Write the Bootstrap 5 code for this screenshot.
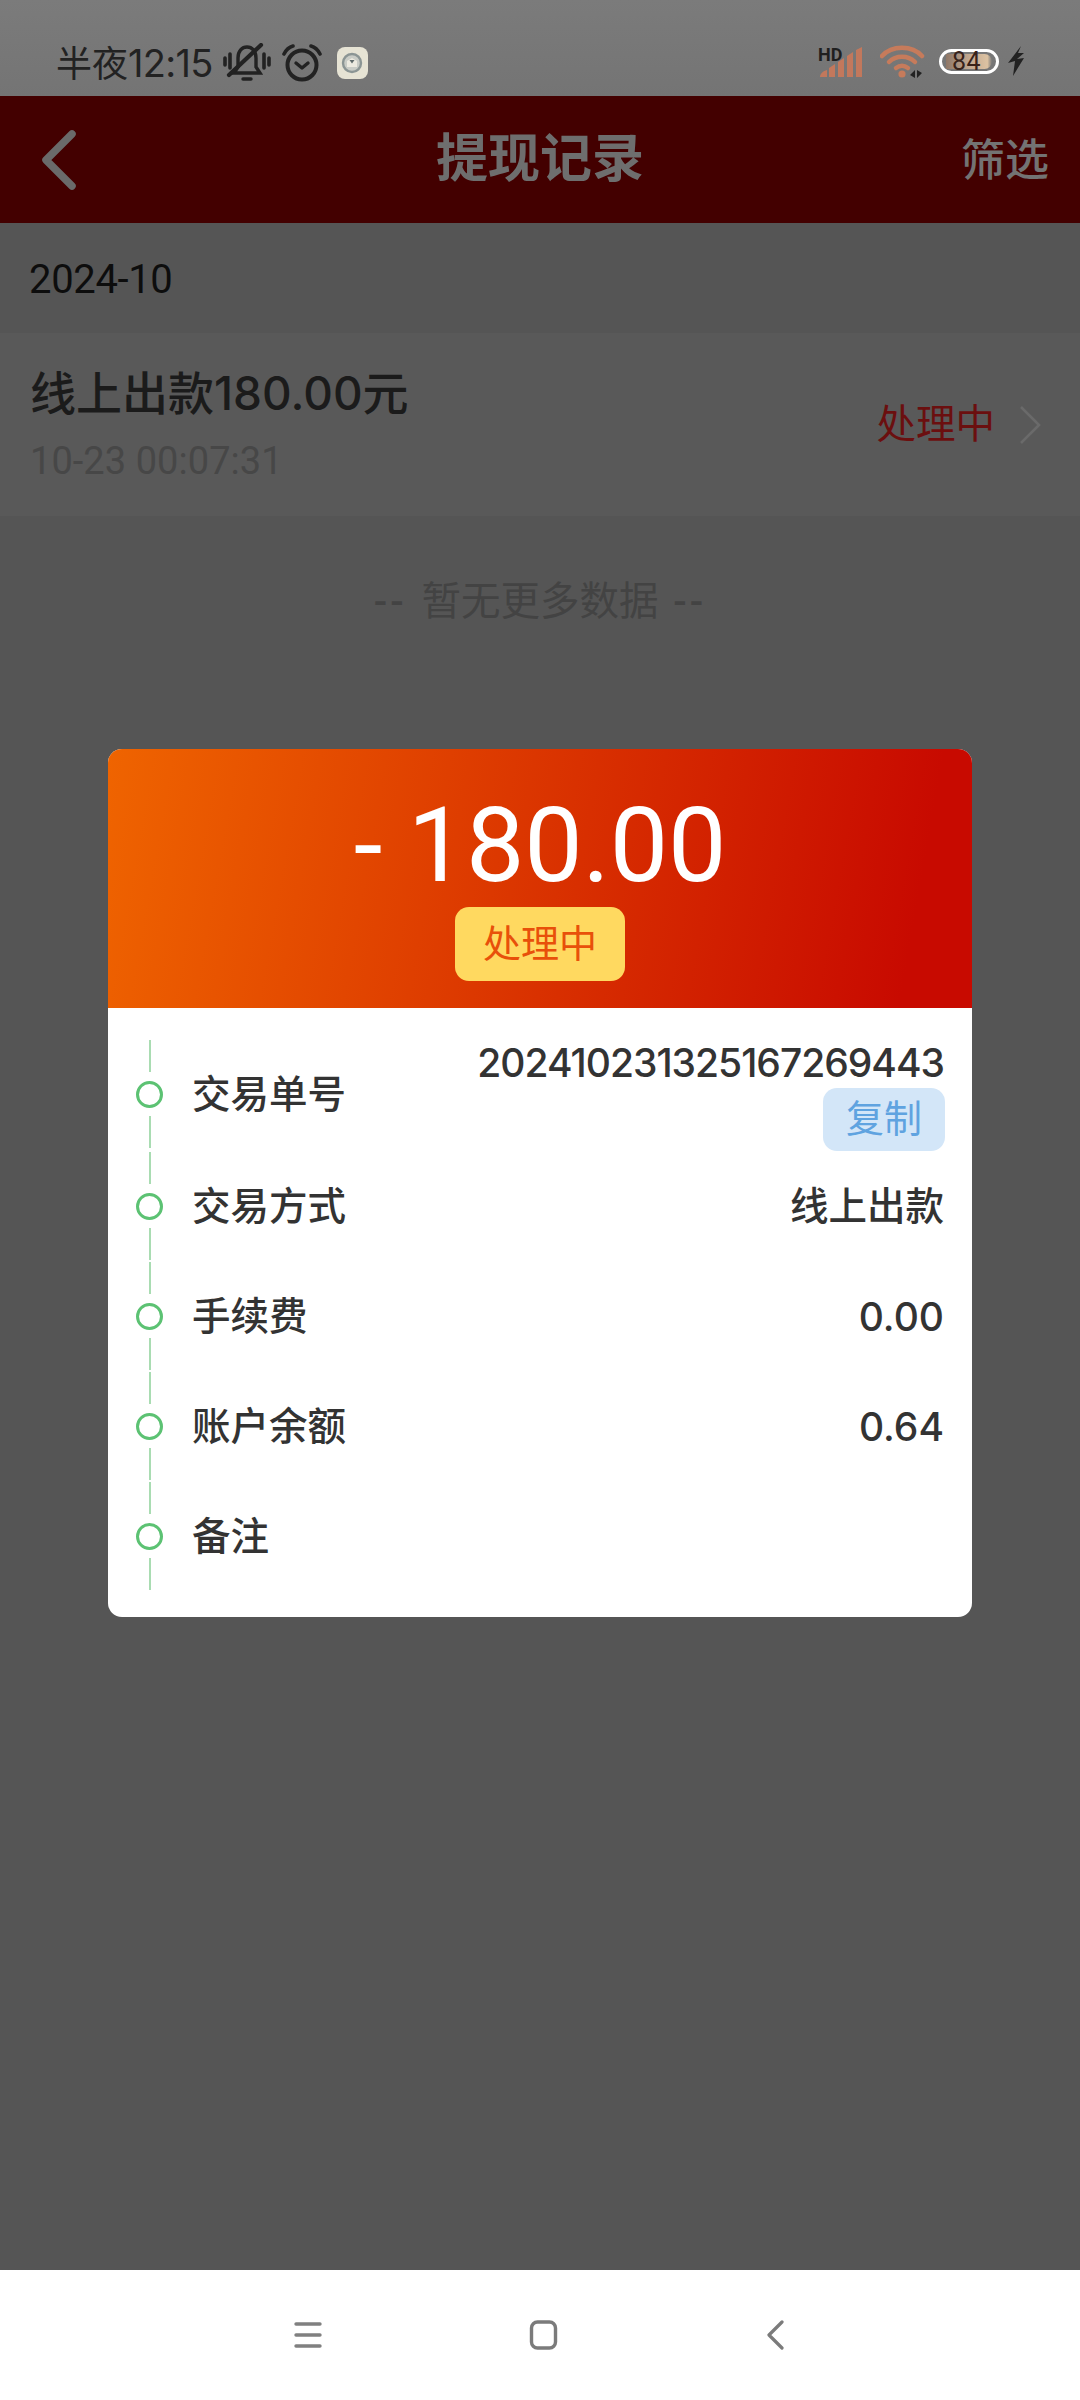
<!DOCTYPE html>
<html lang="zh-CN">
<head>
<meta charset="utf-8">
<title>提现记录</title>
<link href="https://cdn.jsdelivr.net/npm/bootstrap@5.3.0/dist/css/bootstrap.min.css" rel="stylesheet">
<style>
html,body{margin:0;height:2400px;width:1080px;overflow:hidden}
body{font-family:"Roboto","Noto Sans CJK SC",sans-serif;background:#555;position:relative}
.shell{height:2400px}
.stat{height:96px;background:linear-gradient(#7b7b7b,#747474);color:#222;padding:29px 55px 0 56px}
.clock{font-size:36px;line-height:1;margin-right:10px;font-family:"Inter","Noto Sans CJK SC",sans-serif;white-space:nowrap}
.clock span{letter-spacing:-.7px;font-size:38px}
.alarm{margin-left:11px}
.appico{width:31px;height:32px;border-radius:8px;background:#e6e3d4;margin-left:15px}
.bar{height:127px;background:#430000;padding:0 31px 0 40px;position:relative}
.ttl{font-size:52px;font-weight:700;color:#6e6e6e;line-height:1;position:absolute;left:0;right:0;text-align:center;top:38px}
.flt{font-size:44px;font-weight:500;color:#737373;line-height:1;margin-top:2px}
.mon{height:110px;background:#555;color:#0d0d0d;font-size:40px;padding-left:29px;padding-top:3px;letter-spacing:-.35px}
.rec{height:183px;background:#595959;padding:0 39px 0 30px}
.rec-t{font-size:46px;font-weight:500;color:#1b1b1b;line-height:1;margin-bottom:26px;font-family:"Inter","Noto Sans CJK SC",sans-serif}
.rec-d{font-size:38px;color:#474747;line-height:1;letter-spacing:.05px}
.rec-s{font-size:39.5px;color:#6b0f0f;line-height:1;margin-right:24px}
.nomore{font-size:39.5px;color:#434343;line-height:1;padding-top:66px;word-spacing:5px}
.dd{letter-spacing:3px;font-weight:500}
.dim{background:#555}
.nav-b{height:130px;background:#fff;padding:0 296px 0 294px}
.dlg{left:108px;top:749px;width:864px;border-radius:14px;overflow:hidden;background:#fff}
.dlg-h{height:259px;background:linear-gradient(100deg,#ef6400,#c80a00 92%);padding-top:45px}
.amt{font-size:104px;line-height:1;color:#fff;margin-bottom:9px;letter-spacing:-.2px;white-space:nowrap}
.pill-s{width:170px;height:74px;background:#ffd960;color:#e8500a;font-size:38px;border-radius:14px}
.dlg-b{padding:32px 27px 25px 28px}
.itm{height:110px}
.itm-f{margin-bottom:2px}
.rail{width:27px;height:110px;margin-right:29px;padding-bottom:2px}
.dash{width:2px;height:32px;background:#a9dcb2}
.dot{width:27px;height:27px;border:3px solid #5cc273;border-radius:50%}
.lab{font-size:38.5px;font-weight:500;line-height:1;color:#333}
.val{font-size:39px;line-height:1;color:#333;font-family:"Inter","Noto Sans CJK SC",sans-serif;font-weight:500;padding-right:1px;margin-top:-2px}
.val-n{letter-spacing:-1px;margin-top:0;padding-top:4px}
.val-c{font-size:38.5px}
.copyb{width:122px;height:63px;background:#d3e6f8;color:#5fa3e0;font-size:38px;border-radius:14px;margin-top:6px}
.bat{width:60px;height:25px;border:3px solid #fff;border-radius:13px;padding:2px 4px;margin-left:13px}
.batf{border-radius:0 8px 8px 0;background:linear-gradient(90deg,#8f7767 0,#bda48e 45%,#dcc2a2 90%,#777 100%);font-size:25px;line-height:15px;color:#38221a;padding-left:6px;letter-spacing:.5px}
.hd{font-size:18px;font-weight:700;color:#1f1f1f;line-height:1;left:0;top:0}
.sig{width:46px;height:32px}
.ind-r{margin-top:-2px}
</style>
</head>
<body>
<div class="shell d-flex flex-column">
  <div class="stat d-flex align-items-center">
    <span class="clock">半夜<span>12:15</span></span>
    <svg width="48" height="40" viewBox="0 0 48 40" fill="none" stroke="#222" stroke-linecap="round" stroke-width="3.6">
      <path d="M2 15v7M7 11v14M41 11v14M46 15v7"/>
      <path d="M11 30h26l-4-6V15C33 8 29 4 24 4s-9 4-9 11v9z" stroke-width="3.4"/>
      <path d="M6 32 38 2" stroke-width="4.2"/>
      <path d="M20 36h8" stroke-width="3.4"/>
    </svg>
    <svg width="40" height="38" viewBox="0 0 40 38" fill="none" stroke="#222" stroke-linecap="round" stroke-linejoin="round" class="alarm">
      <circle cx="20" cy="21" r="14.5" stroke-width="4"/>
      <path d="M14 19l6 5 6-5" stroke-width="3.4"/>
      <path d="M2 10c2-4 5-7 9-8M38 10c-2-4-5-7-9-8" stroke-width="3.6"/>
    </svg>
    <span class="appico d-flex align-items-center justify-content-center">
      <svg width="22" height="22" viewBox="0 0 22 22"><circle cx="11" cy="11" r="9" fill="#c9ccc6" stroke="#8b9594" stroke-width="2.4"/><path d="M6 9l5-3 5 3v6H6z" fill="#eceae0"/><path d="M8.5 8h5L11 11.5z" fill="#5f6a6a"/></svg>
    </span>
    <span class="ms-auto d-flex align-items-center ind-r">
      <span class="sig position-relative d-block">
        <svg width="46" height="32" viewBox="0 0 46 32" class="position-absolute top-0 start-0"><path d="M2 31c0-3 3-6 7-7v7zM11 22l6-4v13h-6zM20 16l6-4v19h-6zM29 10l6-4v25h-6zM38 4l6-3v30h-6z" fill="#c2785c"/></svg>
        <span class="hd position-absolute">HD</span>
      </span>
      <svg width="46" height="34" viewBox="0 0 46 34" fill="none" class="ms-3">
        <g stroke="#c67b5b" stroke-width="4.5" stroke-linecap="round"><path d="M2 11C12 0 32 0 42 11"/><path d="M9 17c7-7 19-7 26 0"/><path d="M16 23c4-3 8-3 12 0"/></g>
        <circle cx="22" cy="29" r="3.6" fill="#c67b5b"/>
        <path d="M35 25v8l-5-3zM37 25v8l5-5z" fill="#222"/>
      </svg>
      <span class="bat d-block"><span class="batf d-block">84</span></span>
      <svg width="18" height="32" viewBox="0 0 18 32" class="ms-2"><path d="M14 0 1 17l7-2-2 15L17 12l-7 1 7-6h-6z" fill="#222"/></svg>
    </span>
  </div>
  <div class="bar d-flex align-items-center justify-content-between">
    <svg width="38" height="62" viewBox="0 0 38 62" fill="none" stroke="#6a6a6a" stroke-width="7.5" stroke-linecap="round" stroke-linejoin="round" class="position-relative"><path d="M32 5 6 31l26 26"/></svg>
    <div class="ttl">提现记录</div>
    <div class="flt position-relative">筛选</div>
  </div>
  <div class="mon d-flex align-items-center">2024-10</div>
  <div class="rec d-flex align-items-center justify-content-between">
    <div>
      <div class="rec-t">线上出款180.00元</div>
      <div class="rec-d">10-23 00:07:31</div>
    </div>
    <div class="d-flex align-items-center">
      <span class="rec-s">处理中</span>
      <svg width="22" height="38" viewBox="0 0 22 38" fill="none" stroke="#6a6a6a" stroke-width="2.6"><path d="M2 1l18 18L2 37"/></svg>
    </div>
  </div>
  <div class="dim flex-grow-1 text-center nomore"><span class="dd">--</span> 暂无更多数据 <span class="dd">--</span></div>
  <div class="nav-b d-flex align-items-center justify-content-between">
    <svg width="28" height="30" viewBox="0 0 28 30" fill="none" stroke="#808080" stroke-width="3.4" stroke-linecap="round"><path d="M2 4h24M2 15h24M2 26h24"/></svg>
    <svg width="30" height="30" viewBox="0 0 30 30" fill="none" stroke="#7b7b7b" stroke-width="3.4"><rect x="2.5" y="2" width="24" height="26" rx="6"/></svg>
    <svg width="18" height="30" viewBox="0 0 18 30" fill="none" stroke="#7b7b7b" stroke-width="3.2" stroke-linecap="round" stroke-linejoin="round"><path d="M16 2 3 15l13 13"/></svg>
  </div>
</div>

<div class="dlg card border-0 position-absolute">
  <div class="dlg-h d-flex flex-column align-items-center">
    <div class="amt">- 180.00</div>
    <div class="pill-s d-flex align-items-center justify-content-center">处理中</div>
  </div>
  <div class="dlg-b">
    <div class="itm itm-f d-flex align-items-center">
      <div class="rail d-flex flex-column align-items-center justify-content-between"><i class="dash"></i><i class="dot"></i><i class="dash"></i></div>
      <div class="lab">交易单号</div>
      <div class="ms-auto d-flex flex-column align-items-end">
        <div class="val val-n">202410231325167269443</div>
        <div class="copyb d-flex align-items-center justify-content-center">复制</div>
      </div>
    </div>
    <div class="itm d-flex align-items-center">
      <div class="rail d-flex flex-column align-items-center justify-content-between"><i class="dash"></i><i class="dot"></i><i class="dash"></i></div>
      <div class="lab">交易方式</div><div class="val val-c ms-auto">线上出款</div>
    </div>
    <div class="itm d-flex align-items-center">
      <div class="rail d-flex flex-column align-items-center justify-content-between"><i class="dash"></i><i class="dot"></i><i class="dash"></i></div>
      <div class="lab">手续费</div><div class="val ms-auto">0.00</div>
    </div>
    <div class="itm d-flex align-items-center">
      <div class="rail d-flex flex-column align-items-center justify-content-between"><i class="dash"></i><i class="dot"></i><i class="dash"></i></div>
      <div class="lab">账户余额</div><div class="val ms-auto">0.64</div>
    </div>
    <div class="itm d-flex align-items-center">
      <div class="rail d-flex flex-column align-items-center justify-content-between"><i class="dash"></i><i class="dot"></i><i class="dash"></i></div>
      <div class="lab">备注</div>
    </div>
  </div>
</div>
<script src="https://cdn.jsdelivr.net/npm/bootstrap@5.3.0/dist/js/bootstrap.bundle.min.js"></script>
</body>
</html>
